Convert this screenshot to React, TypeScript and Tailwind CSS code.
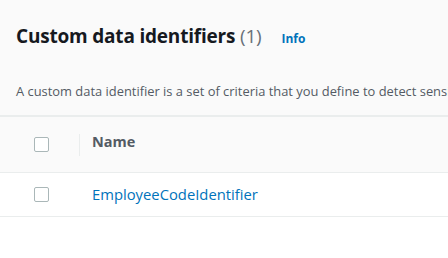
import React from 'react';

// Table header + single row of custom data identifiers
function Checkbox() {
  return <div className="w-[15px] h-[15px] rounded-[2px] border border-[#aab7b8] bg-white" />;
}

export default function App() {
  return (
    <div className="w-[448px] h-[258px] overflow-hidden bg-white font-['Open_Sans',sans-serif]">
      {/* Header */}
      <div className="h-[117px] bg-[#fafafa] border-b-2 border-[#eaeded] pl-4 pt-[22px]">
        <div className="flex items-baseline">
          <h1 className="text-[19px] leading-[28px] font-bold text-[#16191f] tracking-[-0.2px]">
            Custom data identifiers <span className="font-normal text-[#687078]">(1)</span>
          </h1>
          <a className="ml-5 text-[12px] font-bold text-[#0073bb]">Info</a>
        </div>
        <p className="mt-[32px] text-[12.9px] leading-[18px] text-[#545b64] whitespace-nowrap">
          A custom data identifier is a set of criteria that you define to detect sensitive data.
        </p>
      </div>

      {/* Column header */}
      <div className="flex items-center h-[56px] bg-[#fafafa] border-b border-[#eaeded]">
        <div className="w-[80px] pl-[34px] flex items-center">
          <Checkbox />
          <div className="ml-[30px] w-px h-[22px] bg-[#eaeded]" />
        </div>
        <span className="ml-[12px] -mt-[6px] text-[14.5px] font-bold text-[#545b64]">Name</span>
      </div>

      {/* Row */}
      <div className="flex items-center h-[44px] border-b border-[#eaeded]">
        <div className="w-[80px] pl-[34px] flex items-center">
          <Checkbox />
        </div>
        <a className="ml-[12px] text-[14.8px] text-[#0073bb]">EmployeeCodeIdentifier</a>
      </div>
    </div>
  );
}
